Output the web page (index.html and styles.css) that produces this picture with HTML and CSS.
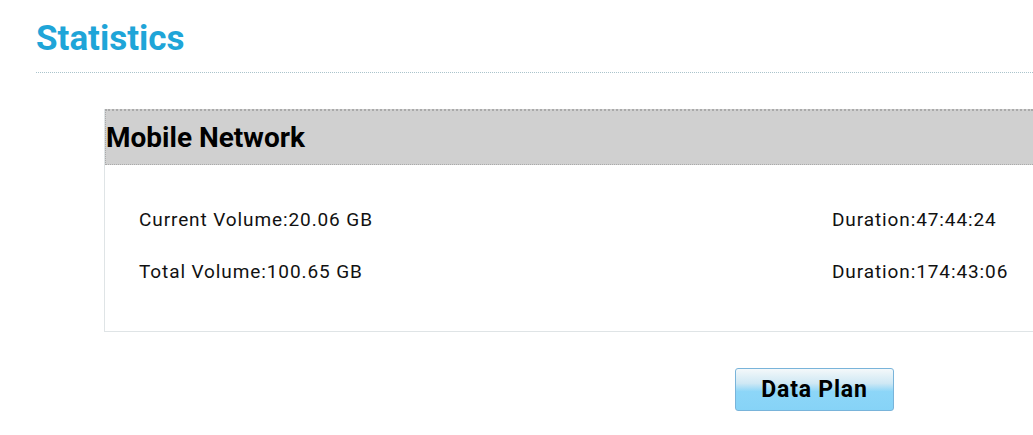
FILE: index.html
```html
<!DOCTYPE html>
<html>
<head>
<meta charset="utf-8">
<link rel="stylesheet" href="styles.css">
</head>
<body>
<div class="page">
  <h1 class="title">Statistics</h1>
  <div class="rule"></div>
  <div class="panel">
    <div class="panel-head">Mobile Network</div>
    <div class="panel-body">
      <div class="row">
        <span class="cell">Current Volume:20.06 GB</span>
        <span class="cell dur">Duration:47:44:24</span>
      </div>
      <div class="row">
        <span class="cell">Total Volume:100.65 GB</span>
        <span class="cell dur">Duration:174:43:06</span>
      </div>
    </div>
  </div>
  <div class="actions">
    <button class="btn">Data Plan</button>
  </div>
</div>
</body>
</html>
```
FILE: styles.css
```css
html, body {
  margin: 0;
  padding: 0;
  background: #fff;
  overflow: hidden;
}
.page {
  padding: 19px 0 0 36px;
  width: 997px;
}
.title {
  margin: 0;
  font-family: Roboto, sans-serif;
  font-weight: 700;
  font-size: 35px;
  line-height: 40px;
  color: #1fa5d8;
}
.rule {
  margin-top: 13px;
  border-top: 1px dotted #aac4cc;
}
.panel {
  margin: 36px 0 0 68px;
  border-left: 1px solid #dfe4e6;
  border-bottom: 1px solid #dfe4e6;
}
.panel-head {
  background: #d0d0d0;
  border-top: 2px dotted #aaa;
  border-bottom: 1px dotted #aaa;
  border-left: 1px dotted #aaa;
  height: 53px;
  padding-left: 0;
  font-family: Roboto, sans-serif;
  font-weight: 700;
  font-size: 28px;
  line-height: 53px;
  color: #000;
}
.panel-body {
  padding: 28px 0 34px 34px;
}
.row {
  display: flex;
  height: 52px;
  align-items: center;
  font-family: Roboto, sans-serif;
  font-size: 19px;
  letter-spacing: 0.9px;
  color: #111;
  white-space: nowrap;
}
.cell {
  width: 693px;
  flex: none;
}
.dur {
  width: auto;
}
.actions {
  padding: 36px 0 0 699px;
}
.btn {
  width: 159px;
  height: 43px;
  border: 1px solid #79b4da;
  border-radius: 3px;
  background: linear-gradient(#f4f8fa 0%, #cfe8f4 35%, #8dd6f8 55%, #86d3f7 100%);
  font-family: Roboto, sans-serif;
  font-weight: 700;
  font-size: 23px;
  letter-spacing: 0.8px;
  color: #000;
  padding: 0;
}
```
